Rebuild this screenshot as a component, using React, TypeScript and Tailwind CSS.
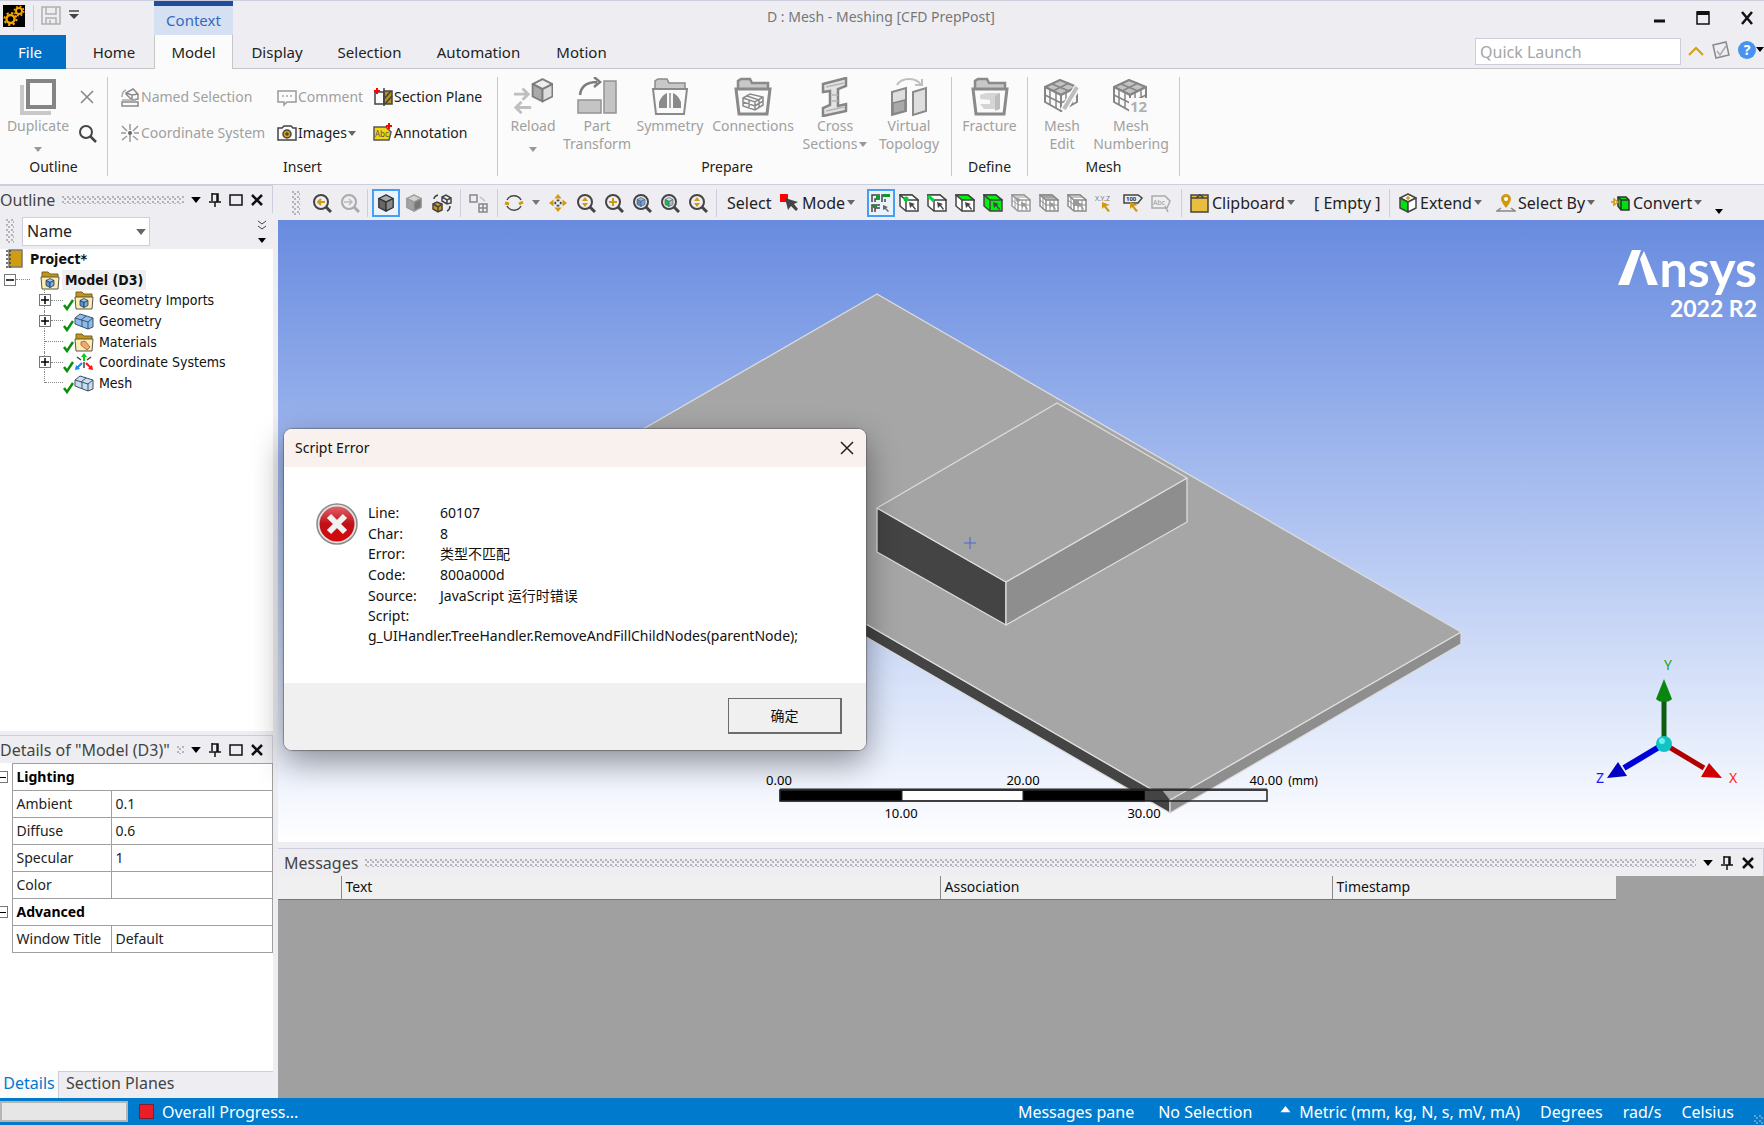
import React from 'react';

import clsx from 'clsx';

const tahoma = "font-['DejaVu_Sans_Condensed','Noto_Sans',sans-serif]";

interface IconProps {
  children: React.ReactNode;
  size?: number;
  box?: number;
  className?: string;
}

const Icon: React.FC<IconProps> = ({ children, size = 20, box = 20, className }) => (
  <svg
    width={size}
    height={size}
    viewBox={`0 0 ${box} ${box}`}
    fill="none"
    stroke="#444"
    strokeWidth="1.5"
    className={clsx('shrink-0', className)}
    aria-hidden="true"
  >
    {children}
  </svg>
);

const Caret: React.FC<{ className?: string; size?: number }> = ({ className = 'text-[#666]', size = 8 }) => (
  <svg width={size} height={size / 2 + 1} viewBox="0 0 8 5" className={clsx('shrink-0', className)} aria-hidden="true">
    <path d="M0 0h8L4 5z" fill="currentColor" />
  </svg>
);

const Separator: React.FC<{ className?: string }> = ({ className }) => (
  <div className={clsx('h-7 w-px shrink-0 bg-[#cccedb]', className)} />
);

const Dots: React.FC<{ className?: string }> = ({ className }) => (
  <div
    className={clsx(
      'bg-[radial-gradient(circle_at_1px_1px,#b4b4b8_1px,transparent_1px),radial-gradient(circle_at_1px_1px,#b4b4b8_1px,transparent_1px)] bg-[size:5px_5px] bg-[position:0_0,2px_2px]',
      className,
    )}
  />
);

/* ---------- Title bar and tabs ---------- */

const AppLogo = () => (
  <svg width="22" height="22" viewBox="0 0 22 22" aria-hidden="true">
    <rect width="22" height="22" fill="#000" />
    <circle cx="7.5" cy="14" r="4" fill="none" stroke="#f5a400" strokeWidth="2.4" />
    <circle cx="7.5" cy="14" r="6" fill="none" stroke="#f5a400" strokeWidth="2" strokeDasharray="2.2 2.5" />
    <circle cx="16" cy="6" r="3" fill="none" stroke="#f5a400" strokeWidth="2" />
    <circle cx="16" cy="6" r="4.7" fill="none" stroke="#f5a400" strokeWidth="1.6" strokeDasharray="1.8 1.9" />
  </svg>
);

const TitleBar = () => (
  <header className="flex h-[35px] border-t border-[#cccedb] bg-[#eeeef2]">
    <div className="flex w-[154px] items-start pt-1 pl-[3px]">
      <AppLogo />
      <div className="ml-2 h-[26px] w-px bg-[#cccedb]" />
      <button type="button" aria-label="Save" className="ml-[7px]">
        <Icon>
          <path d="M1 2h18v17H1z M5 2v7h10V2 M5 19v-6h10v6 M9 15v4" stroke="#b0b0b0" />
        </Icon>
      </button>
      <button type="button" aria-label="Customize quick access" className="mt-[5px] ml-2">
        <Icon size={10} box={10}>
          <path d="M0 1h10" stroke="#444" />
          <path d="M0 4h10L5 9z" fill="#444" stroke="none" />
        </Icon>
      </button>
    </div>
    <div className="flex w-[79px] items-center justify-center border-t-[5px] border-[#204d97] bg-[#d5e0f2] text-[15px] text-[#3569bd]">
      Context
    </div>
    <h1 className="min-w-0 flex-1 truncate pt-1 pl-[534px] text-sm leading-6 text-[#777]">
      D : Mesh - Meshing [CFD PrepPost]
    </h1>
    <div className="flex items-center gap-7 pr-[9px] text-black">
      <button type="button" aria-label="Minimize">
        <Icon size={16} box={16}><path d="M3 11h11" stroke="#111" strokeWidth="3" /></Icon>
      </button>
      <button type="button" aria-label="Maximize">
        <Icon size={16} box={16}>
          <path d="M2 2h12v12H2z" stroke="#111" />
          <path d="M2 3h12" stroke="#111" strokeWidth="4" />
        </Icon>
      </button>
      <button type="button" aria-label="Close">
        <Icon size={16} box={16}><path d="M3 2l10 12M13 2L3 14" stroke="#111" strokeWidth="2.5" /></Icon>
      </button>
    </div>
  </header>
);

const tabs = [
  { name: 'Home', width: 'w-[88px]' },
  { name: 'Model', width: 'w-[79px]' },
  { name: 'Display', width: 'w-[88px]' },
  { name: 'Selection', width: 'w-[97px]' },
  { name: 'Automation', width: 'w-[121px]' },
  { name: 'Motion', width: 'w-[85px]' },
];

const TabBar = () => (
  <nav className="flex h-[34px] bg-[#eeeef2] text-[15px] text-[#222]">
    <button type="button" className="w-[66px] bg-[#0070c6] pr-1.5 text-white">File</button>
    {tabs.map(tab => (
      <button
        key={tab.name}
        type="button"
        className={clsx(
          tab.width,
          'pt-px',
          tab.name === 'Model' ? 'border-x border-[#c6c6c8] bg-[#fbfbfb]' : 'border-b border-[#c6c6c8]',
          tab.name === 'Home' && 'pl-2',
        )}
      >
        {tab.name}
      </button>
    ))}
    <div className="flex flex-1 items-center justify-end gap-[7px] border-b border-[#c6c6c8]">
      <input
        aria-label="Quick Launch"
        placeholder="Quick Launch"
        className="h-[27px] w-[206px] border border-[#cccedb] bg-white px-1 text-base placeholder:text-[#a5a5a5]"
      />
      <button type="button" aria-label="Collapse ribbon">
        <Icon size={16} box={16}><path d="M1 11l7-7 7 7" stroke="#d5a010" strokeWidth="2" /></Icon>
      </button>
      <button type="button" aria-label="Tasks" className="pb-1">
        <Icon>
          <path d="M2 5l13-3 3 13-13 3z" stroke="#8a8a8a" />
          <path d="M6 11l3 4 6-9" stroke="#aaa" />
        </Icon>
      </button>
      <button type="button" aria-label="Help" className="flex items-center pb-1">
        <span className="flex size-[18px] items-center justify-center rounded-full bg-[#4694f0] text-sm font-bold text-white">?</span>
        <Caret className="text-black" />
      </button>
    </div>
  </nav>
);

/* ---------- Ribbon ---------- */

const Cube: React.FC<{ top?: string; left?: string; right?: string; stroke?: string }> = ({
  top = '#eee',
  left = '#aaa',
  right = '#ddd',
  stroke = '#7d7d7d',
}) => (
  <g stroke={stroke} strokeLinejoin="round">
    <path d="M10 1l8 4-8 4-8-4z" fill={top} />
    <path d="M2 5l8 4v10l-8-4z" fill={left} />
    <path d="M18 5l-8 4v10l8-4z" fill={right} />
  </g>
);

const Folder: React.FC<{ children: React.ReactNode; bold?: boolean }> = ({ children, bold }) => (
  <Icon size={40} box={40}>
    <path d="M5 13V4l3-2h9l2 4h16v7z" fill="#c8c8c8" stroke="#8a8a8a" strokeWidth={bold ? 2.5 : 1.5} />
    <path d="M3 12h34l-3 25H6z" fill="#fafafa" stroke="#8a8a8a" strokeWidth={bold ? 3 : 2} />
    {children}
  </Icon>
);

const MeshCube = () => (
  <g stroke="#858585" strokeWidth="2" strokeLinejoin="round">
    <path d="M3 10l15-7 17 7-16 8z" fill="#c2c2c2" />
    <path d="M3 10v15l16 9V18z" fill="#fafafa" />
    <path d="M35 10v15l-16 9V18z" fill="#fafafa" />
    <path d="M10 7l17 7M27 6l-16 8M8 13v15M14 16v15M3 18l16 8 16-8M24 16v15M30 13v15" strokeWidth="1.5" />
  </g>
);

interface RibbonItem {
  lines: string[];
  width: string;
  caret?: string;
  icon: React.ReactNode;
}

const prepareItems: RibbonItem[] = [
  {
    lines: ['Reload'],
    width: 'w-[60px]',
    caret: 'below',
    icon: (
      <Icon size={40} box={42}>
        <g transform="translate(18 1) scale(1.3)"><Cube /></g>
        <path d="M1 18h14M10 12l6 6-6 6M19 32H4M9 26l-6 6 6 6" stroke="#bfbfbf" strokeWidth="3" />
      </Icon>
    ),
  },
  {
    lines: ['Part', 'Transform'],
    width: 'w-[68px]',
    icon: (
      <Icon size={40} box={40}>
        <path d="M27 4h12v32H27zM1 23h23v13H1z" fill="#c4c4c4" stroke="#929292" />
        <path d="M3 18c1-9 7-13 17-13M17 0l6 5-6 5" stroke="#7d7d7d" strokeWidth="2.5" />
      </Icon>
    ),
  },
  {
    lines: ['Symmetry'],
    width: 'w-[78px]',
    icon: (
      <Folder>
        <path d="M9 31v-6c2-5 5-8 8-9v15zM31 31v-6c-2-5-5-8-8-9v15z" fill="#8a8a8a" stroke="none" />
        <path d="M20 16v15" stroke="#8d8d8d" />
      </Folder>
    ),
  },
  {
    lines: ['Connections'],
    width: 'w-[88px]',
    icon: (
      <Folder bold>
        <path
          d="M10 21l7-4 13 3v8l-8 5-12-4zM10 21l12 4 8-5M22 25v8M16 23v8M14 19l12 4v8M10 25l12 4 8-5"
          stroke="#8a8a8a"
          strokeWidth="1.5"
        />
      </Folder>
    ),
  },
  {
    lines: ['Cross', 'Sections'],
    width: 'w-[76px]',
    caret: 'inline',
    icon: (
      <Icon size={40} box={40}>
        <path d="M8 7l23-6v8l-8 3v17l8-2v7L8 39v-8l7-3V14l-7 1z" fill="#e2e2e2" stroke="#858585" strokeWidth="2.5" />
        <path d="M11 10l18-4M11 34l18-4M17 18h6M17 24h6" stroke="#b5b5b5" />
      </Icon>
    ),
  },
  {
    lines: ['Virtual', 'Topology'],
    width: 'w-[72px]',
    icon: (
      <Icon size={40} box={40}>
        <path d="M3 15l14-4v23L3 38zM24 15l13-4v23l-13 4z" fill="#dedede" stroke="#8a8a8a" strokeWidth="2" />
        <path d="M4 26l12-3v11L4 37z" fill="#a9a9a9" stroke="#858585" />
        <path d="M8 8c5-8 19-8 24 0M26 8h7V2" stroke="#bfbfbf" strokeWidth="2" />
      </Icon>
    ),
  },
];

const defineItems: RibbonItem[] = [
  {
    lines: ['Fracture'],
    width: 'w-[76px]',
    icon: (
      <Folder bold>
        <path d="M10 18l6-2h14v16H14l-4-5h10v-4l-10-1z" fill="#d5d5d5" stroke="none" />
        <path d="M25 19l5-3v16l-5 2z" fill="#bdbdbd" stroke="none" />
      </Folder>
    ),
  },
];

const meshItems: RibbonItem[] = [
  {
    lines: ['Mesh', 'Edit'],
    width: 'w-[68px]',
    icon: (
      <Icon size={40} box={40}>
        <MeshCube />
        <path d="M36 9L21 34" stroke="#fafafa" strokeWidth="7" />
        <path d="M35 10L22 32" stroke="#bdbdbd" strokeWidth="4" />
      </Icon>
    ),
  },
  {
    lines: ['Mesh', 'Numbering'],
    width: 'w-[70px]',
    icon: (
      <Icon size={40} box={40}>
        <MeshCube />
        <path d="M18 21h22v19H18z" fill="#fafafa" stroke="none" />
        <text x="19" y="35" fontSize="15" fontWeight="700" fill="#b0b0b0" stroke="none">12</text>
      </Icon>
    ),
  },
];

const BigButtons: React.FC<{ items: RibbonItem[] }> = ({ items }) => (
  <div className="flex">
    {items.map(item => (
      <button key={item.lines.join(' ')} type="button" className={clsx('flex h-20 flex-col items-center text-[#a0a0a0]', item.width)}>
        <span className="flex h-10 items-center justify-center">{item.icon}</span>
        {item.lines.map((line, i) => (
          <span key={line} className="flex items-center gap-0.5 leading-[18px] whitespace-nowrap">
            {line}
            {item.caret === 'inline' && i === 1 && <Caret className="text-[#999]" />}
          </span>
        ))}
        {item.caret === 'below' && <Caret className="mt-3 text-[#999]" />}
      </button>
    ))}
  </div>
);

const RibbonGroup: React.FC<{ label: string; className?: string; children: React.ReactNode }> = ({ label, className, children }) => (
  <section className={clsx('my-2 flex h-[99px] shrink-0 flex-col border-r border-[#c8c8cc]', className)}>
    <div className="h-20 shrink-0">{children}</div>
    <h2 className="text-center leading-[19px] text-[#222]">{label}</h2>
  </section>
);

const SmallButton: React.FC<{ icon: React.ReactNode; label: string; disabled?: boolean; caret?: boolean }> = ({
  icon,
  label,
  disabled,
  caret,
}) => (
  <button
    type="button"
    disabled={disabled}
    className={clsx('flex h-9 items-center gap-px whitespace-nowrap', disabled ? 'text-[#a0a0a0]' : 'text-[#1c1c1c]')}
  >
    {icon}
    {label}
    {caret && <Caret />}
  </button>
);

const Ribbon = () => (
  <div className="flex h-[116px] border-b border-[#cccedb] bg-[#fbfbfb] text-sm">
    <RibbonGroup label="Outline" className="w-[108px]">
      <div className="flex">
        <button type="button" className="flex w-[76px] flex-col items-center text-[#a0a0a0]">
          <Icon size={40} box={40}>
            <path d="M4 8v28h29" stroke="#c8c8c8" strokeWidth="4" />
            <path d="M10 4h26v26H10z" stroke="#858585" strokeWidth="4" />
          </Icon>
          <span className="leading-[18px]">Duplicate</span>
          <Caret className="mt-3 text-[#999]" />
        </button>
        <div className="flex flex-col pt-0.5 pl-px">
          <button type="button" aria-label="Delete" className="flex h-9 items-center">
            <Icon><path d="M4 4l12 12M16 4L4 16" stroke="#858585" /></Icon>
          </button>
          <button type="button" aria-label="Find" className="flex h-9 items-center">
            <Icon>
              <circle cx="9" cy="9" r="6" stroke="#444" strokeWidth="2" />
              <path d="M13 13l6 6" strokeWidth="2.5" />
            </Icon>
          </button>
        </div>
      </div>
    </RibbonGroup>

    <RibbonGroup label="Insert" className="w-[390px]">
      <div className="flex pt-0.5 pl-3">
        <div className="w-[157px]">
          <SmallButton
            disabled
            label="Named Selection"
            icon={
              <Icon>
                <path d="M2 15h16v4H2zM6 6l7-4 5 5v5l-6 1-6-6zM6 6l6 2 6-1M12 8v5" stroke="#8a8a8a" />
                <path d="M2 10c0-4 1-6 4-7M2 13h14" stroke="#aaa" />
              </Icon>
            }
          />
          <SmallButton
            disabled
            label="Coordinate System"
            icon={
              <Icon>
                <path d="M10 1v6M2 3l5 5M18 3l-5 5M10 12v7M2 17l5-4M18 17l-5-4M1 10h5M14 10h5" stroke="#999" />
                <circle cx="10" cy="10" r="2" fill="#666" stroke="none" />
              </Icon>
            }
          />
        </div>
        <div className="w-[96px]">
          <SmallButton
            disabled
            label="Comment"
            icon={
              <Icon>
                <path d="M1 4h18v11h-9l-3 3v-3H1z" stroke="#999" />
                <path d="M5 9h10" stroke="#aaa" strokeDasharray="2 2" />
              </Icon>
            }
          />
          <SmallButton
            caret
            label="Images"
            icon={
              <Icon>
                <path d="M1 5h4l2-2h7l2 2h3v12H1z" />
                <circle cx="10" cy="11" r="4" fill="#d5a010" />
                <circle cx="10" cy="11" r="1" />
              </Icon>
            }
          />
        </div>
        <div>
          <SmallButton
            label="Section Plane"
            icon={
              <Icon>
                <path d="M2 5v12h9V5z" />
                <path d="M11 4h8v13h-8z" fill="#b8901c" />
                <path d="M11 12l7-8M12 17l7-8M11 1v18" />
                <path d="M4 1v6M1 4h6" stroke="#f00" strokeWidth="2" />
              </Icon>
            }
          />
          <SmallButton
            label="Annotation"
            icon={
              <Icon>
                <path d="M1 4h12l5 5-2 8H1z" fill="#f2d70b" stroke="#555" />
                <text x="2" y="14" fontSize="8" fill="#555" stroke="none">Abc</text>
                <path d="M16 0v6M13 3h6" stroke="#f00" strokeWidth="2" />
              </Icon>
            }
          />
        </div>
      </div>
    </RibbonGroup>

    <RibbonGroup label="Prepare" className="w-[454px] pl-[5px]">
      <BigButtons items={prepareItems} />
    </RibbonGroup>
    <RibbonGroup label="Define" className="w-[76px]">
      <BigButtons items={defineItems} />
    </RibbonGroup>
    <RibbonGroup label="Mesh" className="w-[152px]">
      <BigButtons items={meshItems} />
    </RibbonGroup>
  </div>
);

/* ---------- Graphics toolbar ---------- */

const Magnifier: React.FC<{ children: React.ReactNode; stroke?: string }> = ({ children, stroke = '#444' }) => (
  <Icon>
    <circle cx="9" cy="9" r="7" stroke={stroke} strokeWidth="2" />
    <path d="M14 14l5 5" stroke={stroke} strokeWidth="3" />
    {children}
  </Icon>
);

const zoomArrows = <path d="M9 4l3 4H6zM9 14l3-4H6z" fill="#d09a10" stroke="none" />;

const WireCube: React.FC<{ top?: string; front?: string; mesh?: boolean; stroke?: string; children?: React.ReactNode }> = ({
  top = '#fff',
  front = '#fff',
  mesh,
  stroke = '#444',
  children,
}) => (
  <Icon>
    <path d="M1 2h12l6 5v11H7l-6-5z" fill={front} stroke={stroke} />
    <path d="M1 2h12l6 5H7z" fill={top} stroke={stroke} />
    <path d="M7 7v11" stroke={stroke} />
    {mesh && <path d="M1 7l6 5h12M4 5v11M11 7v11M15 7v11M4 4h12" stroke={stroke} strokeWidth="1" />}
    <path d="M10 9l6 2-2 1 3 4-1 1-3-4-2 2z" fill={mesh ? '#999' : '#444'} stroke="none" />
    {children}
  </Icon>
);

const ToolButton: React.FC<{ label: string; active?: boolean; children: React.ReactNode }> = ({ label, active, children }) => (
  <button
    type="button"
    aria-label={label}
    className={clsx(
      'flex h-7 w-7 shrink-0 items-center justify-center',
      active && 'border-2 border-[#45a0f5] bg-[#eaf3fc]',
    )}
  >
    {children}
  </button>
);

const TextTool: React.FC<{ icon?: React.ReactNode; label: string; width: string; caret?: boolean }> = ({ icon, label, width, caret = true }) => (
  <button type="button" className={clsx('flex h-7 shrink-0 items-center gap-0.5 whitespace-nowrap', width)}>
    {icon}
    {label}
    {caret && <Caret />}
  </button>
);

const ViewToolbar = () => (
  <div className="flex h-[35px] items-center overflow-hidden bg-[#eeeef2] pl-3.5 text-base text-[#222]">
    <Dots className="mr-2 h-6 w-2 shrink-0" />
    <div className="flex shrink-0 items-center">
      <ToolButton label="Previous view">
        <Magnifier><path d="M13 9H6M9 6L6 9l3 3" stroke="#d09a10" strokeWidth="2" /></Magnifier>
      </ToolButton>
      <ToolButton label="Next view">
        <Magnifier stroke="#aaa"><path d="M4 9h8M9 6l3 3-3 3" stroke="#bbb" /></Magnifier>
      </ToolButton>
      <Separator className="mr-1 ml-[3px]" />
      <ToolButton label="Shaded with edges" active>
        <Icon size={18}><Cube top="#aaa" left="#666" right="#888" stroke="#333" /></Icon>
      </ToolButton>
      <ToolButton label="Shaded">
        <Icon size={18}><Cube top="#d2d2d2" left="#a2a2a2" right="#777" stroke="#999" /></Icon>
      </ToolButton>
      <ToolButton label="Wireframe">
        <Icon>
          <path d="M10 4l4-2 5 3v5l-4 1-5-3zM10 4l5 3 4-2M15 7v4" />
          <path d="M1 11l4-2 5 2v6l-4 2-5-3z" fill="#c99820" />
          <path d="M1 11l5 3 4-3M6 14v5M2 6c0-2 1-3 4-4M18 13c0 3-1 4-3 5" />
        </Icon>
      </ToolButton>
      <Separator className="mx-1" />
      <ToolButton label="Show mesh">
        <Icon>
          <path d="M1 2h7v7H1z" stroke="#888" />
          <path d="M10 11h8v8h-8zM14 11v8M10 15h8" stroke="#888" />
          <path d="M11 4l5 4" stroke="#bbb" />
        </Icon>
      </ToolButton>
      <Separator className="mr-0.5 ml-1" />
      <ToolButton label="Rotate">
        <Icon>
          <path d="M3 7a8 8 0 0114 0M17 13a8 8 0 01-14 0" />
          <path d="M19 9l-4 2M1 10l4 1" stroke="#d09a10" strokeWidth="3" />
        </Icon>
      </ToolButton>
      <div className="flex w-4 justify-center"><Caret className="text-[#777]" /></div>
      <ToolButton label="Pan">
        <Icon size={18}>
          <path d="M10 0l4 5H6zM10 20l4-5H6zM0 10l5-4v8zM20 10l-5-4v8z" fill="#d09a10" stroke="none" />
          <path d="M10 6v2M10 12v2M6 10h2M12 10h2" strokeWidth="3" />
        </Icon>
      </ToolButton>
      <ToolButton label="Zoom">
        <Magnifier>{zoomArrows}</Magnifier>
      </ToolButton>
      <ToolButton label="Zoom in">
        <Magnifier><path d="M9 5v8M5 9h8" stroke="#d09a10" strokeWidth="2" /></Magnifier>
      </ToolButton>
      <ToolButton label="Box zoom">
        <Magnifier><g transform="translate(4 4) scale(.5)"><Cube top="#8fb5e5" left="#5588cc" right="#77a4de" stroke="#567" /></g></Magnifier>
      </ToolButton>
      <ToolButton label="Zoom to fit">
        <Magnifier><g transform="translate(4 4) scale(.5)"><Cube top="#cde" left="#00d020" right="#abc" stroke="#567" /></g></Magnifier>
      </ToolButton>
      <ToolButton label="Look at">
        <Magnifier>{zoomArrows}</Magnifier>
      </ToolButton>
    </div>
    <Separator className="mr-2.5 ml-1" />
    <span className="w-[53px] shrink-0">Select</span>
    <TextTool
      width="w-[87px]"
      label="Mode"
      icon={
        <Icon>
          <path d="M0 1h8v8H0z" fill="#f00" stroke="none" />
          <path d="M5 5l13 4-4 2 4 5-2 2-5-5-3 4z" fill="#444" stroke="none" />
        </Icon>
      }
    />
    <div className="flex shrink-0 items-center">
      <ToolButton label="Smart select" active>
        <Icon>
          <path d="M1 9V2h8M4 9V6h5M11 9V2h8M14 9V6M1 19v-7h8M4 19v-4h5" />
          <path d="M5 3h4v3H5zM12 1h7v3h-7zM2 12h4v3H2z" fill="#0b9b25" stroke="none" />
          <path d="M12 12l5 2-2 1 3 3-1 1-3-3-2 1z" fill="#666" stroke="none" />
        </Icon>
      </ToolButton>
      <ToolButton label="Vertex"><WireCube><circle cx="7" cy="6" r="2.5" fill="#0c3" stroke="none" /></WireCube></ToolButton>
      <ToolButton label="Edge"><WireCube><path d="M1 3l6 5" stroke="#0d3" strokeWidth="3" /></WireCube></ToolButton>
      <ToolButton label="Face"><WireCube top="#00f012" /></ToolButton>
      <ToolButton label="Body"><WireCube top="#00f012" front="#00f012" /></ToolButton>
      <ToolButton label="Node"><WireCube mesh stroke="#999"><circle cx="7" cy="7" r="2" fill="#999" stroke="none" /></WireCube></ToolButton>
      <ToolButton label="Element face"><WireCube mesh stroke="#8a8a8a" top="#bbb" /></ToolButton>
      <ToolButton label="Element"><WireCube mesh stroke="#8a8a8a"><path d="M6 7h6v6H6z" fill="#999" stroke="none" /></WireCube></ToolButton>
      <ToolButton label="Coordinate pick">
        <Icon>
          <text x="0" y="8" fontSize="7" fill="#777" stroke="none">X.Y.Z</text>
          <path d="M7 9l8 3-4 1 4 5-2 1-4-5-2 2z" fill="#d09a10" stroke="none" />
        </Icon>
      </ToolButton>
      <ToolButton label="Label">
        <Icon>
          <path d="M1 2h14l4 3-4 5H1z" />
          <text x="3" y="8" fontSize="6" fontWeight="700" fill="#333" stroke="none">100</text>
          <path d="M7 9l8 3-4 1 4 5-2 1-4-5-2 2z" fill="#d09a10" stroke="none" />
        </Icon>
      </ToolButton>
      <ToolButton label="Annotation label">
        <Icon>
          <path d="M1 3h13l5 5-3 7H1zM14 13l3 6" stroke="#aaa" />
          <text x="2" y="12" fontSize="7" fill="#999" stroke="none">Abc</text>
        </Icon>
      </ToolButton>
    </div>
    <Separator className="mr-2 ml-1.5" />
    <TextTool
      width="w-[124px]"
      label="Clipboard"
      icon={
        <Icon>
          <path d="M1 2h17v17H1z" fill="#e8bd40" />
          <path d="M1 5h17M6 5l4-3 4 3" />
        </Icon>
      }
    />
    <TextTool width="w-[75px]" label="[ Empty ]" caret={false} />
    <Separator className="mr-2" />
    <TextTool
      width="w-[98px]"
      label="Extend"
      icon={
        <Icon>
          <Cube top="#fff" left="#00e010" right="#fff" stroke="#444" />
          <path d="M10 3v4M8 5h4" stroke="#d09a10" />
        </Icon>
      }
    />
    <TextTool
      width="w-[115px]"
      label="Select By"
      icon={
        <Icon>
          <path d="M10 1a5 5 0 015 5c0 3-5 9-5 9S5 9 5 6a5 5 0 015-5z" fill="#d09a10" stroke="none" />
          <circle cx="10" cy="6" r="2" fill="#fff" stroke="none" />
          <path d="M5 15l-4 3h18l-4-3" stroke="#888" />
        </Icon>
      }
    />
    <TextTool
      width="w-[100px]"
      label="Convert"
      icon={
        <Icon>
          <path d="M7 4h8l3 3v10h-8l-3-4z" fill="#00e010" stroke="#333" />
          <path d="M7 4l3 3h8M10 7v10" stroke="#333" />
          <path d="M0 9h4M3 6l4 3-4 3z" stroke="#d09a10" />
        </Icon>
      }
    />
    <button type="button" aria-label="More tools" className="ml-1 self-end pb-1.5"><Caret className="text-black" /></button>
  </div>
);

/* ---------- Docked panels ---------- */

const PanelHeader: React.FC<{ title: string; maximize?: boolean }> = ({ title, maximize = true }) => (
  <div className="flex h-7 items-center gap-[7px] border-t border-r border-[#cccedb] bg-[#eeeef2] pr-2">
    <h2 className="text-base whitespace-nowrap text-[#444]">{title}</h2>
    <Dots className="h-2 min-w-0 flex-1" />
    <button type="button" aria-label="Panel menu"><Caret size={10} className="text-black" /></button>
    <button type="button" aria-label="Pin">
      <Icon size={14} box={14}><path d="M4 0v8M4 1h6v8M9 1v8M1 9h12M7 9v5" stroke="#111" /></Icon>
    </button>
    {maximize && (
      <button type="button" aria-label="Maximize panel">
        <Icon size={14} box={14}><path d="M1 2h12v10H1z" stroke="#111" /></Icon>
      </button>
    )}
    <button type="button" aria-label="Close panel">
      <Icon size={14} box={14}><path d="M2 2l10 10M12 2L2 12" stroke="#111" strokeWidth="2.5" /></Icon>
    </button>
  </div>
);

const FolderSmall: React.FC<{ children?: React.ReactNode }> = ({ children }) => (
  <Icon>
    <path d="M2 8V2h6l2 2h8v4z" fill="#c8940e" stroke="#77601c" strokeWidth="1" />
    <path d="M1 7h18l-1 12H2z" fill="#fbeeb0" stroke="#555" strokeWidth="1" />
    {children}
  </Icon>
);

const SmallBlock: React.FC<{ fill: string }> = ({ fill }) => (
  <Icon>
    <path d="M1 7l5-4 13 4v9l-5 2L1 13z" fill={fill} stroke="#3f5063" strokeWidth="1" />
    <path d="M1 7l13 4 5-4M14 11v7M8 9v7M7 9l5-4" stroke="#3f5063" strokeWidth="1" />
  </Icon>
);

const miniCube = (
  <g transform="translate(5 8) scale(.5)"><Cube top="#9fc6f0" left="#5a93d6" right="#74abe8" stroke="#234" /></g>
);

const treeItems = [
  { name: 'Geometry Imports', expandable: true, icon: <FolderSmall>{miniCube}</FolderSmall> },
  { name: 'Geometry', expandable: true, icon: <SmallBlock fill="#8dbcf0" /> },
  {
    name: 'Materials',
    expandable: false,
    icon: <FolderSmall><path d="M7 10l4-1 5 6-3 3-6-5z" fill="#f0a878" stroke="#b07040" strokeWidth="1" /></FolderSmall>,
  },
  {
    name: 'Coordinate Systems',
    expandable: true,
    icon: (
      <Icon>
        <path d="M3 5l4 3M17 5l-4 3M10 10v6" />
        <path d="M10 9V3" stroke="#0c2" strokeWidth="2" />
        <path d="M7 5l3-4 3 4z" fill="#0c2" stroke="none" />
        <path d="M8 11l-5 5" stroke="#18f" strokeWidth="2" />
        <path d="M1 18l1-5 4 4z" fill="#18f" stroke="none" />
        <path d="M12 11l5 5" stroke="#f11" strokeWidth="2" />
        <path d="M19 18l-1-5-4 4z" fill="#f11" stroke="none" />
      </Icon>
    ),
  },
  { name: 'Mesh', expandable: false, icon: <SmallBlock fill="#c8dcf2" /> },
];

const Expander: React.FC<{ open?: boolean; label: string }> = ({ open, label }) => (
  <button type="button" aria-label={label} className="flex size-3 shrink-0 items-center justify-center border border-[#777] bg-white">
    <svg width="8" height="8" viewBox="0 0 8 8" stroke="#000" strokeWidth="1.5" aria-hidden="true">
      <path d={open ? 'M0 4h8' : 'M0 4h8M4 0v8'} />
    </svg>
  </button>
);

const OutlineTree = () => (
  <ul className={clsx('grid h-36 grid-rows-7 text-sm text-[#111]', tahoma)}>
    <li className="flex items-center gap-1.5 pl-1 font-bold">
      <Icon>
        <path d="M5 1h13v17H5z" fill="#cf9c12" stroke="#777" />
        <path d="M3 1v18M6 1v18" strokeDasharray="2 2" />
      </Icon>
      Project*
    </li>
    <li className="flex items-center pl-1 font-bold">
      <Expander open label="Collapse Model" />
      <span className="mr-2.5 w-3.5 border-t border-dotted border-[#888]" />
      <FolderSmall>{miniCube}</FolderSmall>
      <span className="ml-0.5 bg-[#efefef] px-[3px] leading-5">Model (D3)</span>
    </li>
    {treeItems.map((item, i) => (
      <li key={item.name} className="relative flex items-center pl-[39px]">
        <span
          className={clsx(
            'absolute top-0 left-11 border-l border-dotted border-[#888]',
            i === treeItems.length - 1 ? 'h-1/2' : 'h-full',
          )}
        />
        <span className="relative flex w-6 items-center">
          {item.expandable ? <Expander label={`Expand ${item.name}`} /> : <span className="w-1.5" />}
          <span className="flex-1 border-t border-dotted border-[#888]" />
        </span>
        <svg width="11" height="14" viewBox="0 0 11 14" fill="none" className="mt-2 shrink-0" aria-hidden="true">
          <path d="M1 8l3 4 6-9" stroke="#0a8f0a" strokeWidth="2.5" />
        </svg>
        {item.icon}
        <span className="ml-[5px] whitespace-nowrap">{item.name}</span>
      </li>
    ))}
  </ul>
);

const detailGroups = [
  {
    name: 'Lighting',
    rows: [
      ['Ambient', '0.1'],
      ['Diffuse', '0.6'],
      ['Specular', '1'],
      ['Color', ''],
    ],
  },
  { name: 'Advanced', rows: [['Window Title', 'Default']] },
];

const DetailsTable = () => (
  <table className="w-full border-collapse text-sm text-[#222]">
    <tbody>
      {detailGroups.map(group => (
        <React.Fragment key={group.name}>
          <tr className="h-[27px]">
            <td className="w-3 p-0">
              <button
                type="button"
                aria-label={`Collapse ${group.name}`}
                className="flex h-3 w-2 items-center border border-l-0 border-[#777]"
              >
                <span className="block h-px w-1.5 bg-black" />
              </button>
            </td>
            <th colSpan={2} className="border border-[#a0a0a0] px-1 py-0 text-left font-bold text-black">{group.name}</th>
          </tr>
          {group.rows.map(([name, value]) => (
            <tr key={name} className="h-[27px]">
              <td className="w-3 p-0" />
              <th className="w-[99px] border border-[#a0a0a0] px-1 py-0 text-left font-normal whitespace-nowrap">{name}</th>
              <td className="border border-[#a0a0a0] px-1 py-0">{value}</td>
            </tr>
          ))}
        </React.Fragment>
      ))}
    </tbody>
  </table>
);

const Sidebar = () => (
  <aside className="flex w-[273px] shrink-0 flex-col bg-white">
    <PanelHeader title="Outline" />
    <div className="flex h-9 items-center bg-[#eeeef2] px-1.5">
      <Dots className="h-6 w-2" />
      <div className="relative ml-2">
        <select aria-label="Filter by" className="h-[29px] w-32 appearance-none border border-[#cccedb] bg-white px-1 text-base text-[#222]">
          <option>Name</option>
        </select>
        <Caret size={10} className="absolute top-3 right-1 text-[#666]" />
      </div>
      <div className="ml-auto flex flex-col items-center gap-2">
        <Icon size={10} box={10}><path d="M1 1l4 3 4-3M1 6l4 3 4-3" strokeWidth="1" /></Icon>
        <Caret className="text-black" />
      </div>
    </div>
    <div className="min-h-0 flex-1 overflow-hidden">
      <OutlineTree />
    </div>
    <div className="h-1 bg-[#eeeef2]" />
    <div className="flex h-[363px] flex-col">
      <PanelHeader title={'Details of "Model (D3)"'} />
      <div className="flex-1">
        <DetailsTable />
      </div>
      <div className="flex h-[27px] bg-[#eeeef2] text-base leading-5">
        <button type="button" className="w-[59px] border-r border-[#cccedb] bg-[#fbfbfb] pb-1 text-[#0078d0]">Details</button>
        <button type="button" className="flex-1 border-t border-[#cccedb] pb-1 pl-[7px] text-left text-[#444]">Section Planes</button>
      </div>
    </div>
  </aside>
);

/* ---------- 3D view ---------- */

const Model = () => (
  <svg viewBox="278 220 1486 622" preserveAspectRatio="xMidYMid slice" className="absolute inset-0 size-full" role="img" aria-label="Model geometry">
    <g stroke="#dcdcdc" strokeWidth="1.3" strokeLinejoin="round">
      <path d="M586 462l584 338v13L586 475z" fill="#444" />
      <path d="M1170 800l291-168v12l-291 169z" fill="#8e8e8e" />
      <path d="M877 294l584 338-291 168L586 462z" fill="#a6a6a6" />
      <path d="M877 508l129 74v43l-129-73z" fill="#444" />
      <path d="M1006 582l181-104v44l-181 103z" fill="#8e8e8e" />
      <path d="M1057 403l130 75-181 104-129-74z" fill="#a4a4a4" />
    </g>
    <path d="M964 543h12M970 537v12" stroke="#4a66d8" strokeWidth="1" />
    <g stroke="#222" fill="none">
      <path d="M780 790h122v11H780zM1023 790h122v11h-122z" fill="#000" />
      <path d="M902 790h121v11H902z" fill="#fff" />
      <path d="M1145 790h17l8 10 -8 1h-17z" fill="#444" stroke="none" />
      <path d="M780 790h487v11H780z" strokeWidth="1.5" />
      <path d="M780 788h487v3H780z" fill="#222" fillOpacity=".5" stroke="none" />
    </g>
    <g fontSize="13" fill="#000" textAnchor="middle">
      <text x="779" y="785">0.00</text>
      <text x="1023" y="785">20.00</text>
      <text x="1266" y="785">40.00</text>
      <text x="1303" y="785" fontSize="12">(mm)</text>
      <text x="901" y="818">10.00</text>
      <text x="1144" y="818">30.00</text>
    </g>
  </svg>
);

const Triad = () => (
  <svg width="150" height="140" viewBox="1595 650 150 140" className="absolute right-[19px] bottom-[51px]" role="img" aria-label="Axes">
    <path d="M1664 743v-48" stroke="#0c5c12" strokeWidth="5" />
    <path d="M1664 678l8 20c-3 4-13 4-16 0z" fill="#0a860f" />
    <path d="M1664 743l-40 24" stroke="#0000d8" strokeWidth="6" />
    <path d="M1607 777l11-16 9 14z" fill="#0000c0" />
    <path d="M1664 743l40 24" stroke="#b00000" strokeWidth="5" />
    <path d="M1722 777l-13-15-8 14z" fill="#d00000" />
    <circle cx="1664" cy="743" r="8" fill="#10c4c4" />
    <circle cx="1662" cy="740" r="3" fill="#6af0ee" />
    <g fontSize="14" textAnchor="middle">
      <text x="1668" y="669" fill="#12a512">Y</text>
      <text x="1600" y="782" fill="#1a1aff">Z</text>
      <text x="1733" y="782" fill="#f22">X</text>
    </g>
  </svg>
);

const Brand = () => (
  <div className="absolute top-5 right-[7px] flex flex-col items-end font-['Lato',sans-serif] font-bold text-white">
    <div className="flex items-end">
      <svg width="41" height="35" viewBox="0 0 41 35" className="mb-[11px]" role="img" aria-label="A">
        <path d="M0 35L14 0h9L11 35z" fill="#fff" />
        <path d="M22 9l4-8 14 34H30z" fill="#fff" />
      </svg>
      <span className="text-[50px] leading-[56px]">nsys</span>
    </div>
    <span className="text-[23px] leading-6">2022 R2</span>
  </div>
);

const Viewport = () => (
  <div className="relative min-h-0 flex-1 overflow-hidden bg-linear-to-b from-[#698bdf] to-white">
    <Model />
    <Triad />
    <Brand />
  </div>
);

const Messages = () => (
  <section className="flex h-[256px] flex-col bg-[#a0a0a0]">
    <div className="h-1.5 bg-[#eeeef2]" />
    <div className="bg-[#eeeef2] [&>div]:pl-1.5">
      <PanelHeader title="Messages" maximize={false} />
    </div>
    <table className="w-[1338px] table-fixed border-collapse bg-[#f0f0f0] text-sm text-[#111]">
      <thead>
        <tr className="h-[23px] border-b border-[#777]">
          <th className="w-[63px] border-r border-[#888] p-0" aria-label="Type" />
          <th className="w-[599px] border-r border-[#888] px-1 text-left font-normal">Text</th>
          <th className="w-[392px] border-r border-[#888] px-1 text-left font-normal">Association</th>
          <th className="px-1 text-left font-normal">Timestamp</th>
        </tr>
      </thead>
    </table>
  </section>
);

const StatusBar = () => (
  <footer className="flex h-[27px] items-center bg-[#007acc] text-base whitespace-nowrap text-white">
    <div role="progressbar" aria-label="Overall progress" className="h-[21px] w-32 border-2 border-[#b5b5b5] bg-[#e6e6e6]" />
    <button type="button" aria-label="Stop" className="ml-[11px] size-[15px] border border-[#7a2030] bg-[#ee1c25]" />
    <span className="ml-2 flex-1">Overall Progress...</span>
    <span className="mr-6">Messages pane</span>
    <span className="mr-7">No Selection</span>
    <Caret size={11} className="mr-2 mb-1 rotate-180" />
    <span className="mr-5">Metric (mm, kg, N, s, mV, mA)</span>
    <span className="mr-5">Degrees</span>
    <span className="mr-5">rad/s</span>
    <span className="mr-5">Celsius</span>
    <Dots className="size-2.5 self-end opacity-60" />
  </footer>
);

/* ---------- Dialog ---------- */

const errorFields = [
  ['Line:', '60107'],
  ['Char:', '8'],
  ['Error:', '类型不匹配'],
  ['Code:', '800a000d'],
  ['Source:', 'JavaScript 运行时错误'],
  ['Script:', ''],
];

const ErrorDialog = () => (
  <div
    role="dialog"
    aria-labelledby="dialog-title"
    className="absolute top-[429px] left-[284px] w-[582px] overflow-hidden rounded-lg bg-white text-sm text-[#111] shadow-[0_12px_32px_rgba(0,0,0,0.4),0_0_1px_1px_rgba(90,90,90,0.5)]"
  >
    <div className="flex h-[38px] items-center justify-between bg-[#f9f1ed] pr-3 pl-[11px]">
      <h2 id="dialog-title">Script Error</h2>
      <button type="button" aria-label="Close dialog">
        <Icon size={14} box={14}><path d="M1 1l12 12M13 1L1 13" stroke="#222" /></Icon>
      </button>
    </div>
    <div className="flex h-[216px] gap-2.5 pt-[36px] pl-8">
      <svg width="42" height="42" viewBox="0 0 42 42" className="shrink-0" aria-hidden="true">
        <defs>
          <linearGradient id="err" x1="0" y1="0" x2="0" y2="1">
            <stop offset="0" stopColor="#e06068" />
            <stop offset=".5" stopColor="#c01018" />
            <stop offset="1" stopColor="#d80808" />
          </linearGradient>
        </defs>
        <circle cx="21" cy="21" r="20" fill="#e2e2e2" stroke="#8a8a8a" strokeWidth="1.5" />
        <circle cx="21" cy="21" r="17.5" fill="url(#err)" />
        <path d="M13 13l16 16M29 13L13 29" stroke="#f1f1f1" strokeWidth="6" />
      </svg>
      <div className="grid h-36 grid-rows-7 leading-5">
        <dl className="row-span-6 grid grid-rows-subgrid">
          {errorFields.map(([name, value]) => (
            <div key={name} className="flex items-center">
              <dt className="w-[72px]">{name}</dt>
              <dd>{value}</dd>
            </div>
          ))}
        </dl>
        <p>g_UIHandler.TreeHandler.RemoveAndFillChildNodes(parentNode);</p>
      </div>
    </div>
    <div className="flex h-[67px] justify-end bg-[#f0f0f0] pt-[15px] pr-6">
      <button type="button" className="h-9 w-[114px] border-t border-r-2 border-b-2 border-l border-[#6c6c6c] bg-[#f0f0f0]">确定</button>
    </div>
  </div>
);

const App: React.FC = () => {
  return (
    <div className="relative flex h-screen flex-col overflow-hidden bg-[#eeeef2] font-['Noto_Sans','Noto_Sans_CJK_SC',sans-serif]">
      <TitleBar />
      <TabBar />
      <Ribbon />
      <div className="flex min-h-0 flex-1 gap-[5px]">
        <Sidebar />
        <main className="flex min-w-0 flex-1 flex-col">
          <ViewToolbar />
          <Viewport />
          <Messages />
        </main>
      </div>
      <StatusBar />
      <ErrorDialog />
    </div>
  );
};

export default App;
